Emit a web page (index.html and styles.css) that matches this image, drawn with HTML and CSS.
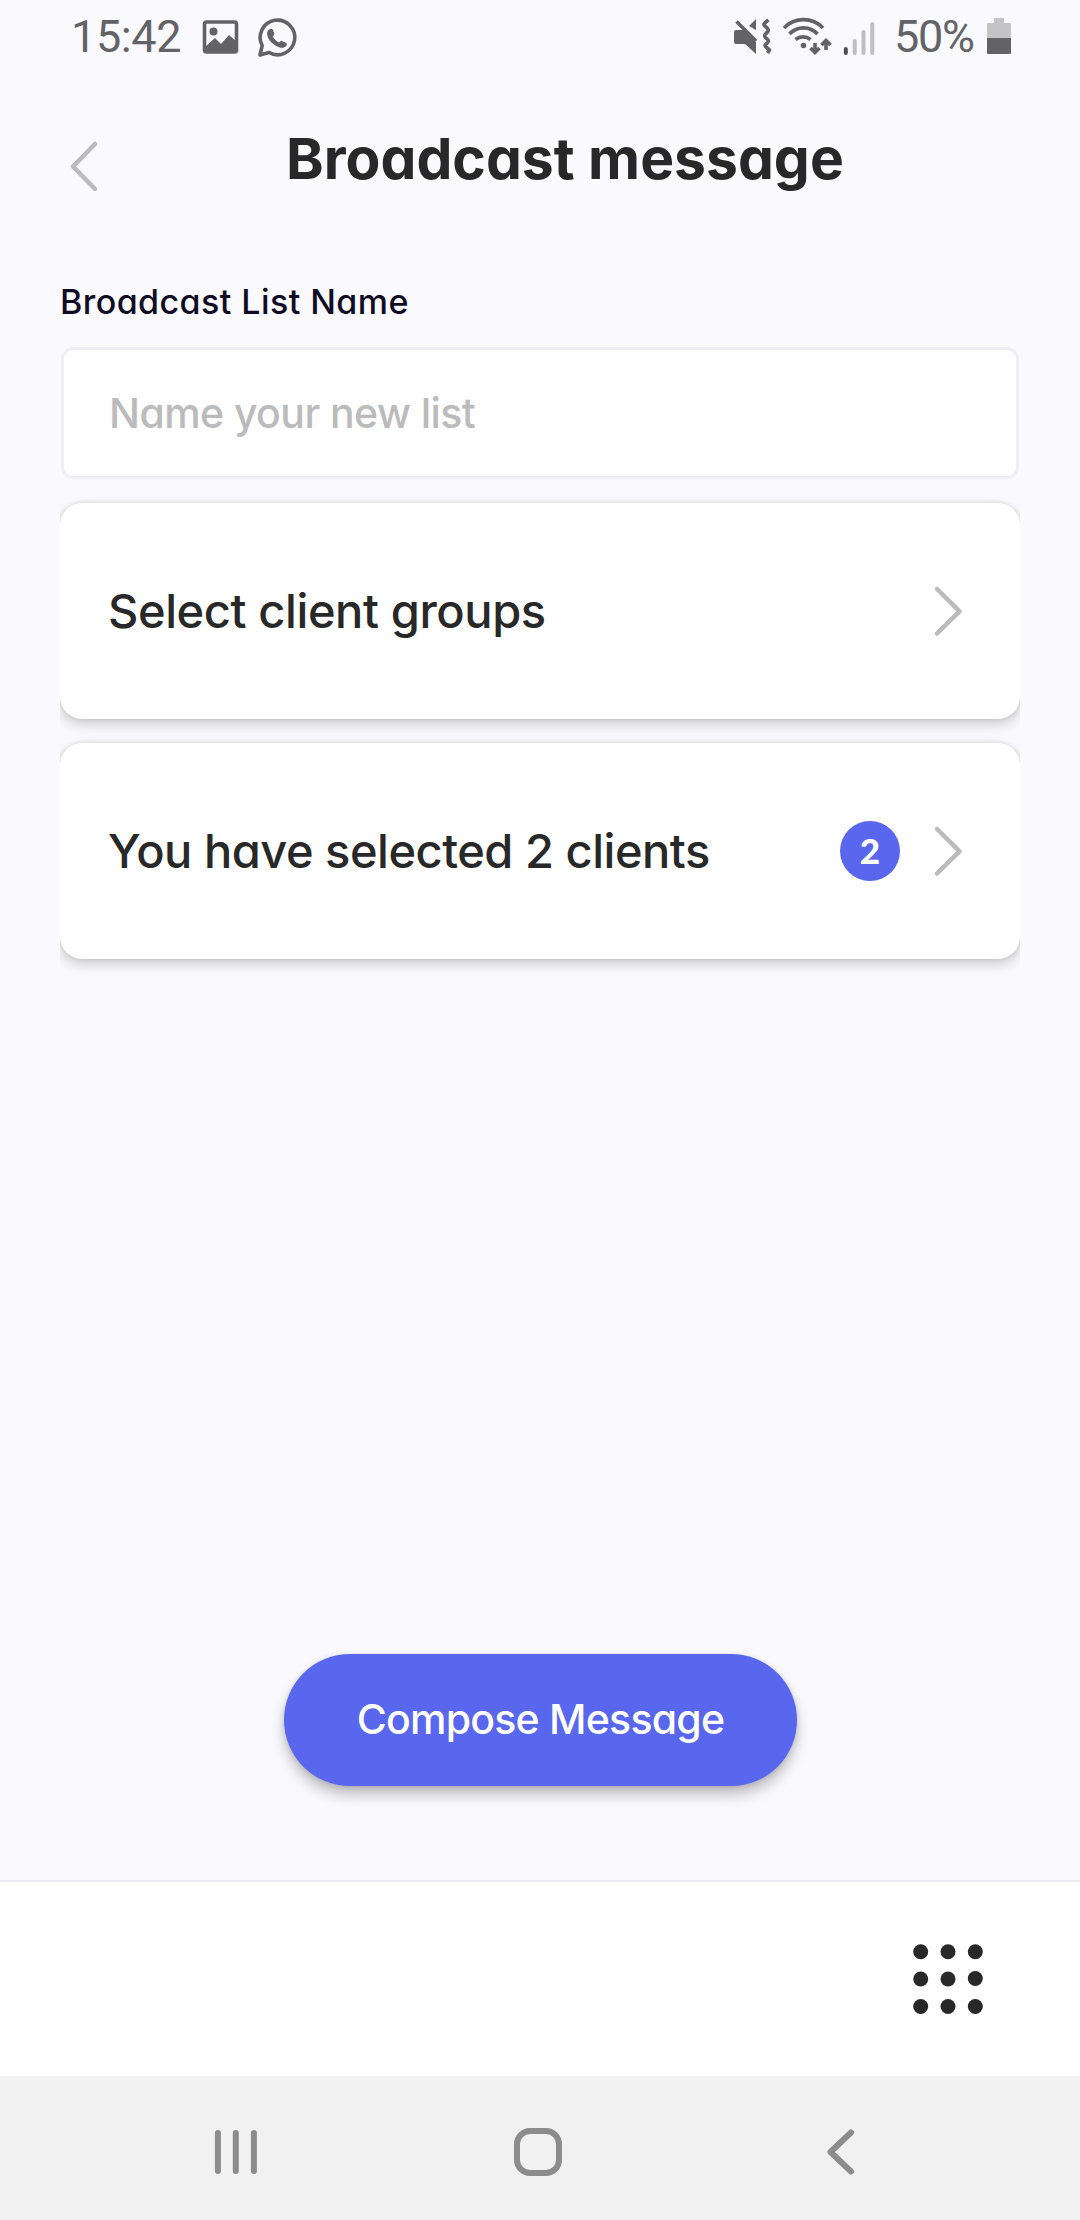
FILE: index.html
```html
<!DOCTYPE html>
<html lang="en">
<head>
<meta charset="utf-8">
<title>Broadcast message</title>
<link rel="stylesheet" href="styles.css">
</head>
<body>
<div class="screen">
  <div class="status">
    <span class="clock">15:42</span>
    <svg class="notify" viewBox="200 10 100 50" width="100" height="50">
      <rect x="204.500" y="21" width="32" height="30" rx="2" fill="none" stroke="#636367" stroke-width="3.600"/>
      <circle cx="213.500" cy="30.500" r="4" fill="#636367"/>
      <path d="M205 46l10-9 6 6 8-9 8 7v11h-32z" fill="#636367"/>
      <path d="M260 54l2.200-9.500A17.300 17.300 0 1 1 269 51.500z" fill="none" stroke="#636367" stroke-width="3.600" stroke-linejoin="round"/>
      <path d="M269 28.500c2-1.600 3.800-.6 4.300 1l1 3c.3 1-.8 2-1.600 3 1.300 2.600 3.700 4.800 6.600 6 1-1.200 1.700-2 2.700-1.600l4 2c1.500.8 1 2.600-.4 3.600-1.600 1.400-4 1.700-6.600.7-5.700-2.300-9.700-6.300-11.500-11-.8-2.800-.5-5.200 1.500-6.700z" fill="#636367"/>
    </svg>
    <svg class="signals" viewBox="730 10 148 50" width="148" height="50">
      <g fill="#636367">
        <path d="M735 29h8l12 12v12l-11-10h-9q-2 0-2-2V31q0-2 2-2zM748 25l7-7v11z"/>
        <circle cx="802.500" cy="44.500" r="2.800"/>
      </g>
      <g fill="none" stroke="#636367" stroke-width="3.600">
        <path d="M735.500 20.500L755 40"/>
        <path d="M767.500 19q-6 4-4 5.500l3 3q2 2-1 4.500-3 2.500-1 4.500l2 2q2 2-1 4t0 4l3 2.500-2 3" stroke-linejoin="round"/>
        <path d="M783 27a27 27 0 0 1 39 0M788.500 33a19 19 0 0 1 28 0M794.500 38.500a12 12 0 0 1 15 0"/>
        <path d="M814 42v9.500M809.500 47l4.500 4.500 4.500-4.500M825 49V39.500M820.500 44l4.500-4.500 4.500 4.500"/>
      </g>
      <g stroke-width="4" stroke-linecap="round">
        <path d="M844.800 48v4" stroke="#4e4e52"/>
        <path d="M853.700 40v12M862.500 31v21M871.300 23v29" stroke="#bfbfc2"/>
      </g>
    </svg>
    <span class="percent">50%</span>
    <svg class="battery" viewBox="986 16 26 40" width="26" height="40">
      <path d="M994 18h10v5h6q1 0 1 1v14h-24V24q0-1 1-1h6z" fill="#c4c4c7"/>
      <path d="M987 38h24v15q0 1-1 1h-22q-1 0-1-1z" fill="#636367"/>
    </svg>
  </div>

  <header class="header">
    <svg class="back" viewBox="0 0 30 50" width="30" height="50"><path d="M26 3L4 25.500 26 48"/></svg>
    <h1 class="title">Broadcast message</h1>
  </header>

  <main class="content">
    <label class="label" for="name">Broadcast List Name</label>
    <input class="field" id="name" type="text" placeholder="Name your new list">
    <section class="cards">
      <div class="card">
        <span class="card-text groups">Select client groups</span>
        <svg class="chevron" viewBox="0 0 30 50" width="30" height="50"><path d="M4 3l22.500 22.300L4 47.500"/></svg>
      </div>
      <div class="card">
        <span class="card-text clients">You have selected 2 clients</span>
        <span class="badge">2</span>
        <svg class="chevron" viewBox="0 0 30 50" width="30" height="50"><path d="M4 3l22.500 22.300L4 47.500"/></svg>
      </div>
    </section>
    <button class="compose"><span>Compose Message</span></button>
  </main>

  <nav class="tabs">
    <svg viewBox="0 0 70 70" width="70" height="70" fill="#282828">
      <circle cx="7.700" cy="7.700" r="7.500"/><circle cx="35" cy="7.700" r="7.500"/><circle cx="62.300" cy="7.700" r="7.500"/>
      <circle cx="7.700" cy="35" r="7.500"/><circle cx="35" cy="35" r="7.500"/><circle cx="62.300" cy="34.500" r="7.500"/>
      <circle cx="7.700" cy="62.500" r="7.500"/><circle cx="35" cy="62.500" r="7.500"/><circle cx="62.300" cy="62.500" r="7.500"/>
    </svg>
  </nav>
  <div class="system">
    <svg viewBox="210 2120 50 64" width="50" height="64"><path d="M217.900 2133v38M235.800 2133v38M253.900 2133v38"/></svg>
    <svg viewBox="510 2120 60 64" width="60" height="64"><rect x="517" y="2131" width="42" height="42" rx="13"/></svg>
    <svg viewBox="820 2120 40 64" width="40" height="64"><path d="M851 2132.500L830.500 2152 851 2171.500"/></svg>
  </div>
</div>
</body>
</html>
```
FILE: styles.css
```css
* { box-sizing: border-box; }
body { margin: 0; background: #f9f9fe; }
.screen {
  width: 1080px; height: 2220px; display: flex; flex-direction: column;
  background: #f9f9fe; color: #282828; overflow: hidden;
  font-family: Inter, "Open Sans", sans-serif; font-feature-settings: "cv11";
}
.status {
  height: 74px; display: flex; align-items: center; padding: 0 68px 2px 71px;
  font-family: Roboto, sans-serif; font-size: 45px; color: #636367; white-space: nowrap;
}
.clock { width: 129px; letter-spacing: -0.4px; }
.signals { margin-left: auto; }
.percent { width: 101px; margin-left: 15px; letter-spacing: -1.300px; }
.battery { margin-left: -9px; }
.status svg { flex: none; }
.header { height: 196px; position: relative; padding: 49px 0 0 286px; }
.back { position: absolute; left: 69px; top: 67px; }
.back path, .chevron path {
  fill: none; stroke: #bbb; stroke-width: 4.500; stroke-linecap: round; stroke-linejoin: round;
}
.title { margin: 0; font-size: 57px; line-height: 72px; font-weight: 700; white-space: nowrap; }
.content { flex: 1; display: flex; flex-direction: column; padding: 0 60px; }
.label { font-size: 34px; line-height: 44px; font-weight: 500; letter-spacing: .43px; color: #100c24; padding: 10px 0 0 0; height: 77px; }
.field {
  height: 132px; width: 958px; margin-left: 1px; border: 3px solid #efeff3; border-radius: 12px;
  background: #fff; padding: 0 45px; font: inherit; font-size: 41px; font-weight: 500; outline: 0;
  font-feature-settings: inherit; letter-spacing: -.58px;
}
.field::placeholder { color: #bbb; opacity: 1; }
.cards { height: 520px; padding-top: 24px; display: flex; flex-direction: column; gap: 24px; overflow: hidden; flex: none; }
.card {
  height: 216px; flex: none; border-radius: 22px; background: #fff; display: flex; align-items: center;
  padding: 0 57px 0 48px; box-shadow: 0 5px 14px rgba(0,0,0,.19), 0 0 5px rgba(0,0,0,.10);
}
.card-text { font-size: 47px; line-height: 60px; font-weight: 500; white-space: nowrap; margin-right: auto; }
.groups { letter-spacing: -.4px; }
.clients { letter-spacing: -.48px; }
.badge {
  width: 60px; height: 60px; border-radius: 50%; background: #5966ee; color: #fff; margin-right: 33px;
  font: 900 35px/58px Lato, sans-serif; text-align: center;
}
.compose {
  width: 513px; height: 132px; margin: 655px 0 0 224px; padding: 0 0 2px; border: 0; border-radius: 66px;
  background: #5966ee; color: #fff; font: inherit; font-size: 41px; font-weight: 500; white-space: nowrap;
  letter-spacing: -.75px;
  font-feature-settings: inherit; box-shadow: 0 9px 14px rgba(0,0,0,.23), 0 1px 5px rgba(0,0,0,.12);
}
.tabs {
  height: 196px; border-top: 2px solid #ececf0; background: #fff; display: flex;
  justify-content: flex-end; padding: 62px 97px 0 0;
}
.system { height: 144px; background: #f1f1f1; display: flex; justify-content: space-between; padding: 44px 220px 0 210px; }
.system svg { fill: none; stroke: #8c8c8c; stroke-width: 6; stroke-linecap: round; stroke-linejoin: round; }
```
